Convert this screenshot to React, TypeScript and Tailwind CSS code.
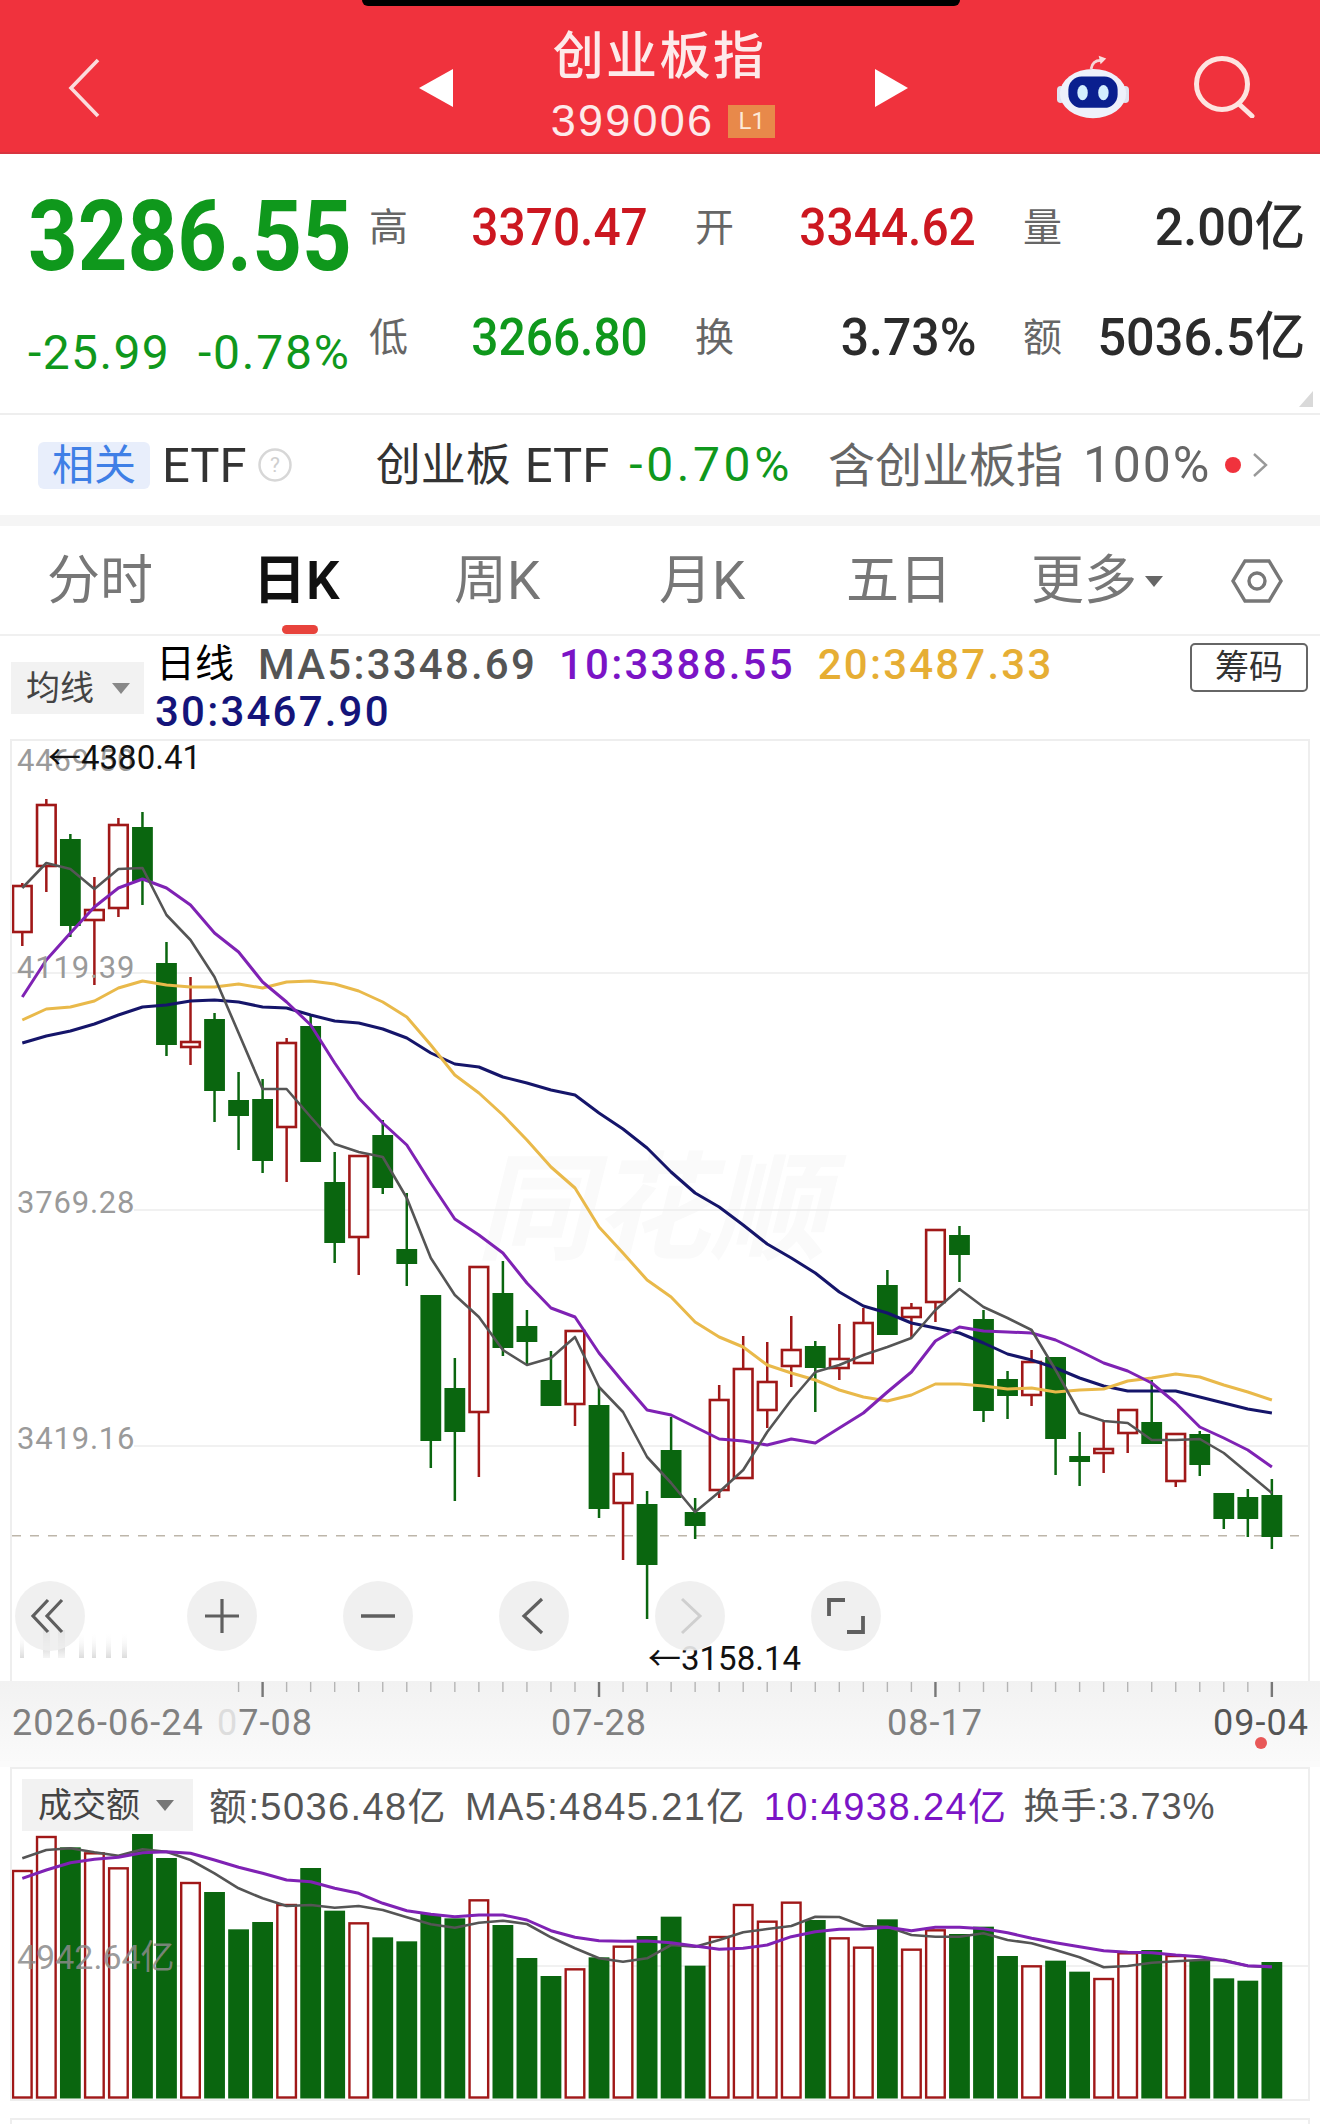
import React from "react";

type C = ["r" | "g", number, number, number, number];
const candles: C[] = [
  ["r",883,885,933,946],["r",799,804,867,892],["g",834,839,926,937],["r",877,909,921,985],["r",818,824,909,917],
  ["g",812,827,881,905],["g",942,963,1045,1056],["r",977,1041,1048,1065],["g",1013,1019,1091,1122],["g",1072,1100,1116,1150],
  ["g",1079,1099,1161,1173],["r",1038,1042,1128,1182],["g",1014,1026,1162,1162],["g",1152,1182,1243,1263],["r",1155,1155,1238,1275],
  ["g",1120,1135,1188,1194],["g",1193,1249,1264,1286],["g",1295,1295,1441,1468],["g",1358,1388,1432,1501],["r",1266,1266,1413,1477],
  ["g",1261,1293,1348,1356],["g",1310,1326,1342,1365],["g",1351,1380,1406,1406],["r",1330,1330,1405,1426],["g",1387,1405,1509,1518],
  ["r",1452,1473,1504,1560],["g",1491,1504,1565,1619],["g",1417,1450,1498,1498],["g",1498,1512,1526,1539],["r",1385,1399,1491,1498],
  ["r",1336,1368,1479,1479],["r",1342,1381,1411,1428],["r",1316,1349,1367,1387],["g",1341,1346,1368,1412],["r",1324,1358,1369,1380],
  ["r",1308,1322,1364,1364],["g",1270,1285,1335,1335],["r",1303,1307,1318,1338],["r",1229,1229,1303,1322],["g",1226,1235,1255,1282],
  ["g",1310,1319,1411,1422],["g",1371,1379,1396,1419],["r",1350,1361,1396,1406],["g",1357,1357,1439,1475],["g",1432,1456,1462,1486],
  ["r",1422,1448,1454,1473],["r",1409,1409,1434,1453],["g",1380,1422,1444,1444],["r",1433,1433,1482,1487],["g",1431,1434,1465,1476],
  ["g",1493,1493,1519,1529],["g",1489,1497,1519,1537],["g",1479,1495,1537,1549],
];
const ma5 = [888,863,869,889,869,868,915,940,977,1033,1089,1089,1117,1144,1152,1157,1198,1258,1295,1317,1350,1365,1358,1337,1387,1412,1457,1483,1512,1492,1470,1432,1400,1372,1365,1355,1347,1338,1310,1289,1307,1318,1330,1370,1413,1421,1423,1440,1440,1439,1453,1473,1493];
const ma10 = [997,960,933,907,888,879,888,905,933,952,982,1002,1025,1063,1098,1123,1145,1183,1219,1235,1253,1283,1308,1317,1353,1382,1410,1415,1427,1439,1441,1445,1439,1443,1428,1413,1392,1372,1341,1327,1331,1332,1333,1340,1351,1363,1371,1383,1403,1427,1438,1450,1467];
const ma20 = [1020,1009,1007,1001,988,981,985,987,987,984,988,982,981,984,991,1002,1017,1045,1075,1093,1115,1140,1167,1188,1227,1253,1280,1297,1322,1337,1347,1365,1373,1380,1390,1397,1401,1395,1384,1384,1386,1389,1388,1392,1390,1389,1381,1378,1374,1377,1385,1392,1400];
const ma30 = [1043,1036,1031,1024,1015,1007,1005,1001,1000,1002,1007,1008,1015,1021,1023,1029,1038,1053,1064,1067,1077,1083,1090,1095,1113,1129,1148,1172,1193,1207,1225,1244,1258,1273,1292,1306,1313,1323,1328,1333,1343,1354,1360,1368,1378,1386,1391,1391,1391,1397,1403,1409,1413];
const volTop = [390,288,322,337,382,282,354,426,456,568,546,492,384,512,547,592,604,522,535,478,555,654,708,685,652,617,588,530,677,588,492,542,485,540,592,620,538,626,568,582,560,648,676,662,695,714,637,630,645,660,715,722,666];
const volMa5 = [355,330,325,337,347,328,335,360,400,445,475,498,495,503,498,510,532,553,563,548,542,552,592,625,655,665,655,615,620,600,577,567,558,530,531,558,560,585,590,590,580,600,610,630,652,682,678,668,664,660,660,678,682];
const volMa10 = [415,390,368,358,352,338,335,340,360,382,400,420,425,445,460,490,512,523,530,525,525,540,572,592,602,604,603,608,618,628,625,615,590,575,568,567,562,572,562,562,566,578,595,608,620,632,637,638,645,650,662,677,680];

const cx = (i: number) => 22.3 + 24.03 * i;
const pts = (a: number[]) => a.map((y, i) => `${cx(i).toFixed(1)},${y}`).join(" ");
const vpts = (a: number[]) => a.map((z, i) => `${cx(i).toFixed(1)},${(1740 + z / 3).toFixed(1)}`).join(" ");
const RED = "#a01818";
const GREEN = "#0a660f";

function Candles() {
  return (
    <>
      {candles.map(([t, hi, top, bot, lo], i) => {
        const x = cx(i);
        const col = t === "r" ? RED : GREEN;
        return (
          <g key={i}>
            <line x1={x} x2={x} y1={hi} y2={top} stroke={col} strokeWidth={2.5} />
            <line x1={x} x2={x} y1={bot} y2={lo} stroke={col} strokeWidth={2.5} />
            {t === "r" ? (
              <rect x={x - 9.3} y={top + 1} width={18.6} height={Math.max(bot - top - 2, 2)} fill="#fff" stroke={col} strokeWidth={2.6} />
            ) : (
              <rect x={x - 10.4} y={top} width={20.8} height={bot - top} fill={col} />
            )}
          </g>
        );
      })}
    </>
  );
}

function Volumes() {
  const b = 2097.5;
  return (
    <>
      {volTop.map((z, i) => {
        const x = cx(i);
        const y = 1740 + z / 3;
        return candles[i][0] === "r" ? (
          <rect key={i} x={x - 9.3} y={y + 1} width={18.6} height={b - y - 1} fill="#fff" stroke={RED} strokeWidth={2.4} />
        ) : (
          <rect key={i} x={x - 10.4} y={y} width={20.8} height={b - y + 1} fill={GREEN} />
        );
      })}
    </>
  );
}

function Stat({ label, value, color }: { label: string; value: string; color: string }) {
  return (
    <div className="flex items-center justify-between h-[48px]">
      <span className="text-[39px] leading-none text-[#666]">{label}</span>
      <span className={`origin-right text-[52px] leading-none font-medium whitespace-nowrap ${color}`}>{value}</span>
    </div>
  );
}

function RoundBtn({ children, extra }: { children: React.ReactNode; extra?: string }) {
  return (
    <div className={`w-[70px] h-[70px] rounded-full bg-[#eeeeee]/90 flex items-center justify-center ${extra ?? ""}`}>
      <svg width="44" height="44" viewBox="0 0 44 44" fill="none" stroke="#5f5f5f" strokeWidth="3.2">
        {children}
      </svg>
    </div>
  );
}

export default function App() {
  return (
    <div className="w-[1320px] h-[2124px] bg-white overflow-hidden relative [font-family:Roboto,'Noto_Sans_CJK_SC',sans-serif]">
      {/* Header */}
      <header className="relative h-[154px] bg-[#f0323d] border-b-2 border-[#d8343f] text-[#fdeaea]">
        <div className="absolute left-[362px] top-0 w-[598px] h-[6px] bg-black rounded-b-[14px]" />
        <div className="flex items-center h-full pt-[24px]">
          <svg className="ml-[67px]" width="34" height="60" viewBox="0 0 34 60" fill="none" stroke="#fbdcdc" strokeWidth="3.6">
            <path d="M31 2 L4 30 L31 58" />
          </svg>
          <svg className="ml-[318px]" width="35" height="38" viewBox="0 0 35 38" fill="#fff">
            <polygon points="34,0 34,38 0,19" />
          </svg>
          <div className="w-[421px] flex flex-col items-center">
            <div className="text-[51px] leading-[48px] tracking-[2.4px] pr-[10px] font-medium">创业板指</div>
            <div className="flex items-center gap-[14px] mt-[18px] pr-[3px]">
              <span className="text-[45px] leading-[44px] tracking-[2.2px] [font-family:'Liberation_Sans',sans-serif]">399006</span>
              <span className="w-[47px] h-[33px] bg-[#e8894a] text-[#fde9d8] text-[24px] leading-[33px] text-center">L1</span>
            </div>
          </div>
          <svg width="33" height="38" viewBox="0 0 33 38" fill="#fff">
            <polygon points="0,0 0,38 33,19" />
          </svg>
          <svg className="ml-[149px] -mt-[4px]" width="72" height="66" viewBox="0 0 76 68">
            <path d="M36 16 C37 10 41 7 46 7" fill="none" stroke="#f5d6d6" strokeWidth="3" />
            <polygon points="44,2 52,5 46,11" fill="#f9dede" />
            <rect x="0" y="34" width="8" height="18" rx="4" fill="#dfe3f0" />
            <rect x="68" y="34" width="8" height="18" rx="4" fill="#dfe3f0" />
            <ellipse cx="38" cy="42" rx="35" ry="26" fill="#eef1fb" />
            <rect x="12" y="24" width="52" height="33" rx="14" fill="#0a1f8f" />
            <ellipse cx="27" cy="41" rx="5.5" ry="8" fill="#d4efff" />
            <ellipse cx="49" cy="41" rx="5.5" ry="8" fill="#d4efff" />
          </svg>
          <svg className="ml-[65px] -mt-[2px]" width="62" height="62" viewBox="0 0 62 62" fill="none" stroke="#fde4e0" strokeWidth="5">
            <circle cx="28" cy="28" r="25.5" />
            <path d="M45 48 L58 60" strokeLinecap="round" />
          </svg>
        </div>
      </header>

      {/* Quote */}
      <section className="relative h-[259px] flex">
        <div className="ml-[28px] w-[341px] text-[#0f981c]">
          <div className="origin-left scale-x-[0.885] text-[98px] leading-[98px] font-bold mt-[34px] whitespace-nowrap">3286.55</div>
          <div className="flex mt-[44px] text-[48px] leading-[46px] whitespace-nowrap">
            <span className="w-[170px] tracking-[1.4px]">-25.99</span>
            <span className="tracking-[1.8px]">-0.78%</span>
          </div>
        </div>
        <div className="grid grid-cols-[279px_281px_282px] gap-x-[47px] gap-y-[62px] content-start pt-[50px]">
          <Stat label="高" value="3370.47" color="scale-x-[0.92] text-[#cc1720]" />
          <Stat label="开" value="3344.62" color="scale-x-[0.92] text-[#cc1720]" />
          <Stat label="量" value="2.00亿" color="scale-x-[0.97] text-[#2b2b2b]" />
          <Stat label="低" value="3266.80" color="scale-x-[0.92] text-[#0f981c]" />
          <Stat label="换" value="3.73%" color="scale-x-[0.96] text-[#2b2b2b]" />
          <Stat label="额" value="5036.5亿" color="scale-x-[0.97] text-[#2b2b2b]" />
        </div>
        <svg className="absolute right-[7px] bottom-[6px]" width="14" height="16" viewBox="0 0 14 16">
          <polygon points="14,0 14,16 0,16" fill="#d9d9d9" />
        </svg>
      </section>

      {/* ETF row */}
      <div className="h-[102px] border-t-2 border-[#eeeeee] flex items-center whitespace-nowrap">
        <span className="ml-[38px] w-[112px] h-[47px] rounded-md bg-[#e8eefb] text-[#3f7fe6] text-[42px] leading-[47px] text-center">相关</span>
        <span className="ml-[12px] text-[49px] leading-none text-[#333]">ETF</span>
        <svg className="ml-[11px]" width="34" height="34" viewBox="0 0 34 34" fill="none">
          <circle cx="17" cy="17" r="15.5" stroke="#d7d7d7" strokeWidth="2.5" />
          <text x="17" y="24" textAnchor="middle" fontSize="21" fill="#cfcfcf">?</text>
        </svg>
        <span className="ml-[84px] text-[45px] leading-none text-[#333]">创业板</span>
        <span className="ml-[14px] text-[49px] leading-none text-[#333]">ETF</span>
        <span className="ml-[20px] text-[48px] leading-none text-[#0f981c] tracking-[3.6px]">-0.70%</span>
        <span className="ml-[35px] text-[47px] leading-none text-[#666]">含创业板指</span>
        <span className="ml-[20px] text-[50px] leading-none text-[#666] tracking-[1.8px]">100%</span>
        <span className="ml-[14px] w-[16px] h-[16px] rounded-full bg-[#f0323d]" />
        <svg className="ml-[11px]" width="16" height="24" viewBox="0 0 16 24" fill="none" stroke="#999" strokeWidth="2.4">
          <path d="M2 1 L14 12 L2 23" />
        </svg>
      </div>
      <div className="h-[11px] bg-[#f5f5f5]" />

      {/* Tabs */}
      <nav className="h-[110px] border-b-2 border-[#f0f0f0] pl-[47px] grid grid-cols-[206px_201px_205px_187px_185px_114px_86px_auto] items-center text-[53px] text-[#777] leading-none pt-[2px]">
        <span>分时</span>
        <span className="relative font-semibold text-[#111] h-full flex items-center">
          日K
          <span className="absolute left-[29px] bottom-0 w-[36px] h-[9px] rounded-full bg-[#e8433c]" />
        </span>
        <span>周K</span>
        <span>月K</span>
        <span>五日</span>
        <span>更多</span>
        <span className="w-0 h-0 border-x-[9px] border-x-transparent border-t-[11px] border-t-[#666]" />
        <svg width="52" height="46" viewBox="0 0 52 46" fill="none" stroke="#777" strokeWidth="3.4">
          <polygon points="14,3 38,3 50,23 38,43 14,43 2,23" />
          <circle cx="26" cy="23" r="8" />
        </svg>
      </nav>

      {/* MA header */}
      <div className="h-[103px] flex">
        <div className="ml-[11px] mt-[26px] w-[133px] h-[52px] bg-[#f2f2f2] flex items-center text-[34px] text-[#444] leading-none">
          <span className="ml-[15px]">均线</span>
          <span className="ml-[18px] w-0 h-0 border-x-[9px] border-x-transparent border-t-[11px] border-t-[#888]" />
        </div>
        <div className="ml-[11px] w-[900px] text-[42px] leading-[47px] tracking-[2.2px] font-medium pt-[5px] whitespace-nowrap">
          <div className="flex items-center">
            <span className="ml-[1px] text-[39px] tracking-[0px] font-normal text-black">日线</span>
            <span className="ml-[24px] text-[#555]">MA5:3348.69</span>
            <span className="ml-[22px] text-[#7b14c6]">10:3388.55</span>
            <span className="ml-[23px] text-[#e6ae34]">20:3487.33</span>
          </div>
          <div className="text-[#14147a]">30:3467.90</div>
        </div>
        <div className="ml-[135px] mt-[7px] w-[118px] h-[49px] border-2 border-[#666] rounded-[5px] text-[34px] text-[#333] leading-[45px] text-center">筹码</div>
      </div>

      {/* K line chart */}
      <div className="relative mx-[10px] h-[942px] border-x-2 border-t-2 border-[#eeeeee]">
        <div className="absolute left-[464px] top-[409px] text-[117px] leading-[120px] font-bold italic text-[#fafafa] whitespace-nowrap">同花顺</div>
        <svg className="relative block" width="1296" height="940" viewBox="12 741 1296 940" fill="none">
          <defs>
            <linearGradient id="fadeA" x1="0" y1="0" x2="0" y2="1">
              <stop offset="0" stopColor="#888" stopOpacity="0.9" />
              <stop offset="1" stopColor="#ddd" stopOpacity="0.3" />
            </linearGradient>
            <linearGradient id="fadeB" x1="0" y1="0" x2="0" y2="1">
              <stop offset="0" stopColor="#fff" stopOpacity="0" />
              <stop offset="1" stopColor="#ccc" stopOpacity="0.7" />
            </linearGradient>
          </defs>
          <line x1="12" x2="1308" y1="973" y2="973" stroke="#ececec" strokeWidth="1.5" />
          <line x1="134" x2="1308" y1="1210" y2="1210" stroke="#ececec" strokeWidth="1.5" />
          <line x1="134" x2="1308" y1="1446" y2="1446" stroke="#ececec" strokeWidth="1.5" />
          <line x1="12" x2="1308" y1="1535.7" y2="1535.7" stroke="#bdb6aa" strokeWidth="1.5" strokeDasharray="9 9" />
          <Candles />
          <polyline points={pts(ma30)} stroke="#15156a" strokeWidth="3" strokeLinejoin="round" />
          <polyline points={pts(ma20)} stroke="#e9b94a" strokeWidth="3" strokeLinejoin="round" />
          <polyline points={pts(ma10)} stroke="#7f22b4" strokeWidth="3" strokeLinejoin="round" />
          <polyline points={pts(ma5)} stroke="#555555" strokeWidth="2.6" strokeLinejoin="round" />
          <rect x="20" y="1632" width="4" height="26" fill="url(#fadeB)" />
          <rect x="43" y="1630" width="7" height="28" fill="url(#fadeA)" />
          <rect x="58" y="1630" width="7" height="28" fill="url(#fadeA)" />
          <rect x="79" y="1632" width="5" height="26" fill="url(#fadeB)" />
          <rect x="92" y="1632" width="4" height="26" fill="url(#fadeB)" />
          <rect x="106" y="1632" width="5" height="26" fill="url(#fadeB)" />
          <rect x="122" y="1632" width="5" height="26" fill="url(#fadeB)" />
        </svg>
        <span className="absolute left-[5px] top-[8px] text-[31px] leading-[24px] tracking-[0.8px] text-[#9a9a9a]">4469.50</span>
        <span className="absolute left-[36px] top-[5px] text-[33px] leading-[24px] text-[#111]">←4380.41</span>
        <span className="absolute left-[5px] top-[215px] text-[31px] leading-[24px] tracking-[0.8px] text-[#9a9a9a]">4119.39</span>
        <span className="absolute left-[5px] top-[450px] text-[31px] leading-[24px] tracking-[0.8px] text-[#9a9a9a]">3769.28</span>
        <span className="absolute left-[5px] top-[686px] text-[31px] leading-[24px] tracking-[0.8px] text-[#9a9a9a]">3419.16</span>
        <span className="absolute left-[636px] top-[906px] text-[33px] leading-[24px] text-[#111]">←3158.14</span>
        <div className="absolute left-[3px] top-[840px] flex gap-[86px]">
          <RoundBtn extra="mr-[16px]">
            <path d="M20 6 L5 22 L20 38 M34 6 L19 22 L34 38" />
          </RoundBtn>
          <RoundBtn>
            <path d="M5 22 H39 M22 5 V39" />
          </RoundBtn>
          <RoundBtn>
            <path d="M5 22 H39" strokeWidth="3.6" />
          </RoundBtn>
          <RoundBtn>
            <path d="M30 5 L12 22 L30 39" />
          </RoundBtn>
          <div className="w-[70px] h-[70px] rounded-full bg-[#eeeeee]/90 flex items-center justify-center">
            <svg width="44" height="44" viewBox="0 0 44 44" fill="none" stroke="#cfcfcf" strokeWidth="3">
              <path d="M14 5 L32 22 L14 39" />
            </svg>
          </div>
          <RoundBtn>
            <path d="M5 22 V6 H21 M39 22 V38 H23" strokeWidth="3.8" />
          </RoundBtn>
        </div>
      </div>

      {/* X axis */}
      <div className="relative h-[80px] bg-gradient-to-b from-[#f2f2f2] to-[#fafafa] text-[36px] leading-none tracking-[1px] text-[#808080]">
        <svg className="absolute left-0 top-0" width="1320" height="18" viewBox="0 0 1320 18" stroke="#a6a6a6">
          {candles.map((_, i) =>
            i >= 9 ? (
              <line
                key={i}
                x1={cx(i)}
                x2={cx(i)}
                y1="1"
                y2={i === 10 || i === 24 || i === 38 || i === 52 ? 16 : 11}
                stroke={i === 10 || i === 24 || i === 38 || i === 52 ? "#777" : "#b5b5b5"}
                strokeWidth={i === 10 || i === 24 || i === 38 || i === 52 ? 2.4 : 1.4}
              />
            ) : null
          )}
        </svg>
        <div className="flex pt-[24px] whitespace-nowrap">
          <span className="ml-[12px] w-[190px]">2026-06-24</span>
          <span className="ml-[15px] w-[92px]">
            <span className="text-[#dddddd]">0</span>7-08
          </span>
          <span className="ml-[242px] w-[94px]">07-28</span>
          <span className="ml-[242px] w-[94px]">08-17</span>
          <span className="ml-[232px] w-[94px] text-[#555]">09-04</span>
        </div>
        <span className="absolute left-[1255px] top-[56px] w-[12px] h-[12px] rounded-full bg-[#e85858]" />
      </div>
      <div className="h-[6px] bg-[#fbfbfb]" />

      {/* Volume */}
      <div className="mx-[10px] h-[334px] border-x-2 border-y-2 border-[#eeeeee]">
        <div className="h-[64px] flex items-start whitespace-nowrap">
          <div className="ml-[10px] mt-[10px] w-[171px] h-[52px] bg-[#f2f2f2] flex items-center text-[34px] text-[#444] leading-none">
            <span className="ml-[16px]">成交额</span>
            <span className="ml-[16px] w-0 h-0 border-x-[9px] border-x-transparent border-t-[11px] border-t-[#777]" />
          </div>
          <div className="ml-[16px] mt-[20px] flex items-center text-[38px] leading-[36px] tracking-[1.4px] text-[#555] [font-family:'Liberation_Sans','Noto_Sans_CJK_SC',sans-serif]">
            <span>额:5036.48亿</span>
            <span className="ml-[18px]">MA5:4845.21亿</span>
            <span className="ml-[18px] text-[#7b14c6]">10:4938.24亿</span>
            <span className="ml-[16px] text-[36px] tracking-[1px]">换手:3.73%</span>
          </div>
        </div>
        <svg className="block" width="1296" height="266" viewBox="12 1833 1296 266" fill="none">
          <line x1="170" x2="1308" y1="1966" y2="1966" stroke="#ececec" strokeWidth="1.5" />
          <Volumes />
          <polyline points={vpts(volMa5)} stroke="#555555" strokeWidth="2.6" strokeLinejoin="round" />
          <polyline points={vpts(volMa10)} stroke="#7f22b4" strokeWidth="3" strokeLinejoin="round" />
          <text x="17" y="1969" fontSize="34" fill="#8a8a8a" fillOpacity="0.85">4942.64亿</text>
        </svg>
      </div>
      <div className="mx-[10px] mt-[17px] h-[8px] border-t-2 border-x-2 border-[#eeeeee]" />
    </div>
  );
}
